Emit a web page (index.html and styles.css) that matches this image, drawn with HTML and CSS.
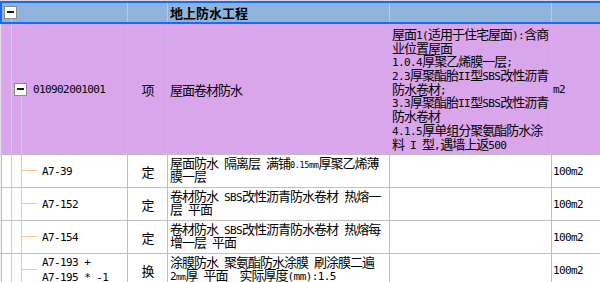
FILE: index.html
```html
<!DOCTYPE html>
<html>
<head>
<meta charset="utf-8">
<link rel="stylesheet" href="styles.css">
</head>
<body>
<div class="grid">
  <div class="row hdr">
    <div class="stub"></div>
    <div class="cell tree t0"><span class="tog"></span></div>
    <div class="cell type"></div>
    <div class="cell name bold">地上防水工程</div>
    <div class="cell desc"></div>
    <div class="cell unit"></div>
  </div>
  <div class="row item">
    <div class="stub"></div>
    <div class="cell tree t1"><span class="tog"></span><span class="code">010902001001</span></div>
    <div class="cell type">项</div>
    <div class="cell name mid">屋面卷材防水</div>
    <div class="cell desc top"><span>屋面<span class="a">1(</span>适用于住宅屋面<span class="a">):</span>含商</span><span>业位置屋面</span><span><span class="a">1.0.4</span>厚聚乙烯膜一层<span class="a">;</span></span><span><span class="a">2.3</span>厚聚酯胎<span class="a">II</span>型<span class="a">SBS</span>改性沥青</span><span>防水卷材<span class="a">;</span></span><span><span class="a">3.3</span>厚聚酯胎<span class="a">II</span>型<span class="a">SBS</span>改性沥青</span><span>防水卷材</span><span><span class="a">4.1.5</span>厚单组分聚氨酯防水涂</span><span>料<span class="a"> I </span>型<span class="a">,</span>遇墙上返<span class="a">500</span></span></div>
    <div class="cell unit"><span class="code">m2</span></div>
  </div>
  <div class="row sub">
    <div class="stub"></div>
    <div class="cell tree t2"><span class="code">A7-39</span></div>
    <div class="cell type">定</div>
    <div class="cell name top"><span>屋面防水<span class="a"> </span>隔离层<span class="a"> </span>满铺<span class="s">0.15mm</span>厚聚乙烯薄</span><span>膜一层</span></div>
    <div class="cell desc"></div>
    <div class="cell unit"><span class="code">100m2</span></div>
  </div>
  <div class="row sub">
    <div class="stub"></div>
    <div class="cell tree t2"><span class="code">A7-152</span></div>
    <div class="cell type">定</div>
    <div class="cell name top"><span>卷材防水<span class="a"> SBS</span>改性沥青防水卷材<span class="a"> </span>热熔一</span><span>层<span class="a"> </span>平面</span></div>
    <div class="cell desc"></div>
    <div class="cell unit"><span class="code">100m2</span></div>
  </div>
  <div class="row sub">
    <div class="stub"></div>
    <div class="cell tree t2"><span class="code">A7-154</span></div>
    <div class="cell type">定</div>
    <div class="cell name top"><span>卷材防水<span class="a"> SBS</span>改性沥青防水卷材<span class="a"> </span>热熔每</span><span>增一层<span class="a"> </span>平面</span></div>
    <div class="cell desc"></div>
    <div class="cell unit"><span class="code">100m2</span></div>
  </div>
  <div class="row sub">
    <div class="stub"></div>
    <div class="cell tree t2"><span class="code two"><span>A7-193 +</span><span>A7-195 * -1</span></span></div>
    <div class="cell type">换</div>
    <div class="cell name top"><span>涂膜防水<span class="a"> </span>聚氨酯防水涂膜<span class="a"> </span>刷涂膜二遍</span><span><span class="a">2</span><span class="s">mm</span>厚<span class="a"> </span>平面<span class="a">  </span>实际厚度<span class="a">(mm):1.5</span></span></div>
    <div class="cell desc"></div>
    <div class="cell unit"><span class="code">100m2</span></div>
  </div>
  <svg class="treelines" width="600" height="290" viewBox="0 0 600 290">
    <g stroke="#f8c88a" stroke-width="1" fill="none">
      <line x1="11.5" y1="18" x2="11.5" y2="22"/>
      <line x1="11.5" y1="24" x2="11.5" y2="290"/>
      <line x1="11" y1="88.5" x2="15" y2="88.5"/>
      <line x1="21.5" y1="95" x2="21.5" y2="290"/>
      <line x1="22" y1="170.5" x2="37" y2="170.5"/>
      <line x1="22" y1="203.5" x2="37" y2="203.5"/>
      <line x1="22" y1="236.5" x2="37" y2="236.5"/>
      <line x1="22" y1="269.5" x2="37" y2="269.5"/>
    </g>
  </svg>
</div>
</body>
</html>
```
FILE: styles.css
```css
html, body {
  margin: 0;
  padding: 0;
  background: #ffffff;
}
body {
  font-family: "Noto Sans CJK SC", sans-serif;
  font-size: 13px;
  letter-spacing: -1px;
  color: #000;
  overflow: hidden;
  width: 600px;
  height: 282px;
}
.grid {
  position: relative;
  width: 600px;
}
.row {
  display: grid;
  grid-template-columns: 2px 126px 40px 222px 162px 1fr;
  border-bottom: 1px solid #c0c0c0;
  position: relative;
}
.stub {
  border-right: 1px solid #c0c0c0;
  background: #f4f4f4;
}
.cell {
  border-right: 1px solid #c0c0c0;
  display: flex;
  align-items: center;
  white-space: nowrap;
  min-width: 0;
}
.cell:last-child {
  border-right: none;
}
.hdr {
  height: 24px;
  box-sizing: border-box;
  background: #8fb3db;
  border-top: 1px solid #d8d8d8;
  border-bottom: none;
}
.hdr .cell,
.hdr .stub {
  border-right-color: #c4c8d0;
  background: transparent;
}
.hdr::after {
  content: "";
  position: absolute;
  left: 0;
  top: 0;
  right: -4px;
  bottom: 0;
  border: 2px solid #146cff;
  border-right: none;
  pointer-events: none;
}
.item {
  height: 131px;
  box-sizing: border-box;
  background: #d9a6ec;
}
.item .stub {
  background: #e6e0ea;
}
.sub {
  height: 33px;
  box-sizing: border-box;
  background: #ffffff;
}
.bold {
  font-weight: bold;
  font-size: 13px;
  letter-spacing: 0;
}
.tree {
  position: relative;
}
.t0 {
  padding-left: 2px;
}
.t1 {
  padding-left: 12px;
  gap: 6px;
}
.t2 {
  padding-left: 40px;
}
.tog {
  position: relative;
  z-index: 2;
  width: 11px;
  height: 11px;
  border: 1px solid #8a8a8a;
  background: #ffffff;
  display: inline-block;
  flex: none;
}
.tog::before {
  content: "";
  position: absolute;
  left: 2px;
  top: 4.5px;
  width: 7px;
  height: 2px;
  background: #1a1a1a;
}
.t0 .tog {
  margin-top: -1px;
}
.code {
  font-family: "DejaVu Sans Mono", "Liberation Mono", monospace;
  font-size: 11px;
  letter-spacing: -0.6px;
}
.code.two {
  display: flex;
  flex-direction: column;
  line-height: 15px;
  white-space: pre;
}
.a {
  font-family: "DejaVu Sans Mono", "Liberation Mono", monospace;
  font-size: 11px;
  letter-spacing: -0.6px;
  white-space: pre;
}
.s {
  font-family: "DejaVu Sans Mono", "Liberation Mono", monospace;
  font-size: 8.5px;
  letter-spacing: -0.4px;
  white-space: pre;
}
.type {
  justify-content: center;
}
.name {
  padding-left: 2px;
}
.name.top {
  flex-direction: column;
  align-items: flex-start;
  justify-content: flex-start;
  padding-top: 1px;
  line-height: 13px;
}
.name.top > span,
.desc.top > span {
  display: block;
  height: 13px;
}
.desc {
  padding-left: 2px;
}
.desc.top {
  flex-direction: column;
  align-items: flex-start;
  justify-content: flex-start;
  padding-top: 3px;
  line-height: 13.7px;
}
.desc.top > span {
  height: 13.7px;
}
.unit {
  padding-left: 1px;
}
.treelines {
  position: absolute;
  left: 0;
  top: 0;
  pointer-events: none;
  z-index: 1;
}
```
